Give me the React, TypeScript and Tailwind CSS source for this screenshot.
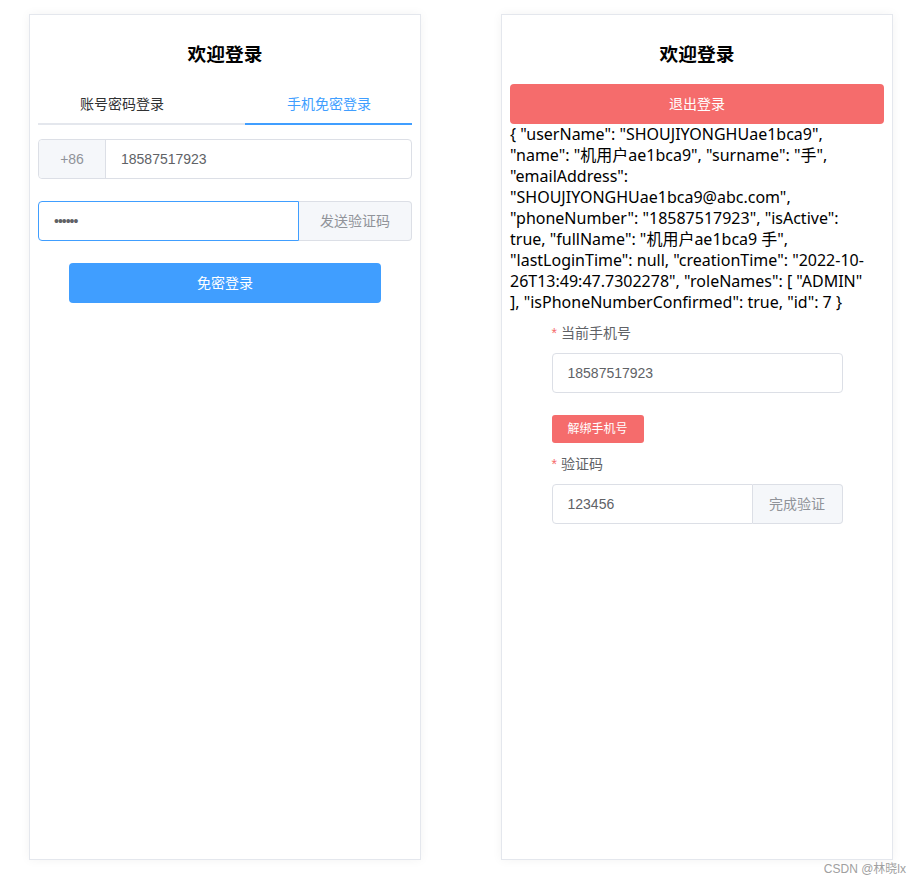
import React from 'react'

const ui = { fontFamily: '"Liberation Sans", "Noto Sans CJK SC", sans-serif' }
const json = { fontFamily: '"Noto Sans", "Noto Sans CJK SC", sans-serif' }

const jsonLines = [
  '{ "userName": "SHOUJIYONGHUae1bca9",',
  '"name": "机用户ae1bca9", "surname": "手",',
  '"emailAddress":',
  '"SHOUJIYONGHUae1bca9@abc.com",',
  '"phoneNumber": "18587517923", "isActive":',
  'true, "fullName": "机用户ae1bca9 手",',
  '"lastLoginTime": null, "creationTime": "2022-10-',
  '26T13:49:47.7302278", "roleNames": [ "ADMIN"',
  '], "isPhoneNumberConfirmed": true, "id": 7 }',
]

const Card = ({ children }: { children: React.ReactNode }) => (
  <div className="w-[392px] h-[846px] border border-[#e4e7ed] bg-white shadow-[0_0_10px_rgba(0,0,0,0.05)] px-[8px] pt-[28px]">
    <h3 className="h-[24px] text-center text-[18.72px] leading-[24px] font-bold text-black">欢迎登录</h3>
    {children}
  </div>
)

const LoginCard = () => (
  <Card>
    <div className="mt-[18px] flex h-[40px] text-[14px]">
      <div className="w-[207px] flex flex-col">
        <div className="flex-1 pl-[42px] leading-[38px] text-[#303133]">账号密码登录</div>
        <div className="h-[2px] bg-[#e4e7ed]" />
      </div>
      <div className="flex-1 flex flex-col">
        <div className="flex-1 pl-[42px] leading-[38px] text-[#409eff]">手机免密登录</div>
        <div className="h-[2px] bg-[#409eff]" />
      </div>
    </div>

    <div className="mt-[14px] flex h-[40px] rounded-[4px] border border-[#dcdfe6] text-[14px]">
      <div className="w-[67px] flex items-center justify-center rounded-l-[4px] border-r border-[#dcdfe6] bg-[#f5f7fa] text-[#909399]">+86</div>
      <div className="flex-1 flex items-center pl-[15px] text-[#606266]">18587517923</div>
    </div>

    <div className="mt-[22px] flex h-[40px] text-[14px]">
      <div className="flex-1 flex items-center rounded-l-[4px] border border-[#409eff] pl-[15px] text-[#606266] tracking-[-1px]">••••••</div>
      <div className="w-[113px] flex items-center justify-center rounded-r-[4px] border border-l-0 border-[#dcdfe6] bg-[#f5f7fa] text-[#909399]">发送验证码</div>
    </div>

    <div className="mt-[22px] flex justify-center">
      <button className="h-[40px] w-[312px] rounded-[4px] bg-[#409eff] text-[14px] text-white">免密登录</button>
    </div>
  </Card>
)

const InfoCard = () => (
  <Card>
    <button className="mt-[17px] h-[40px] w-full rounded-[4px] bg-[#f56c6c] text-[14px] text-white">退出登录</button>
    <div className="text-[16px] leading-[21px] text-black whitespace-nowrap" style={json}>
      {jsonLines.map((l, i) => (
        <div key={i}>{l}</div>
      ))}
    </div>

    <div className="mx-auto mt-[10px] w-[291px] text-[14px]">
      <div className="h-[20px] leading-[20px] text-[#606266]">
        <span className="mr-[4px] text-[#f56c6c]">*</span>当前手机号
      </div>
      <div className="mt-[10px] flex h-[40px] items-center rounded-[4px] border border-[#dcdfe6] pl-[15px] text-[#606266]">18587517923</div>

      <button className="mt-[22px] h-[28px] w-[92px] rounded-[3px] bg-[#f56c6c] text-[12px] text-white">解绑手机号</button>

      <div className="mt-[11px] h-[20px] leading-[20px] text-[#606266]">
        <span className="mr-[4px] text-[#f56c6c]">*</span>验证码
      </div>
      <div className="mt-[10px] flex h-[40px]">
        <div className="flex-1 flex items-center rounded-l-[4px] border border-[#dcdfe6] pl-[15px] text-[#606266]">123456</div>
        <div className="w-[90px] flex items-center justify-center rounded-r-[4px] border border-l-0 border-[#dcdfe6] bg-[#f5f7fa] text-[#909399]">完成验证</div>
      </div>
    </div>
  </Card>
)

const App = (): React.ReactElement => {
  return (
    <div className="relative min-h-screen w-[922px] h-[886px] bg-white" style={ui}>
      <div className="flex gap-[80px] pl-[29px] pt-[14px]">
        <LoginCard />
        <InfoCard />
      </div>
      <div className="absolute right-[16px] bottom-[8px] text-[12px] text-[#a0a0a0]">CSDN @林晓lx</div>
    </div>
  )
}

export default App
